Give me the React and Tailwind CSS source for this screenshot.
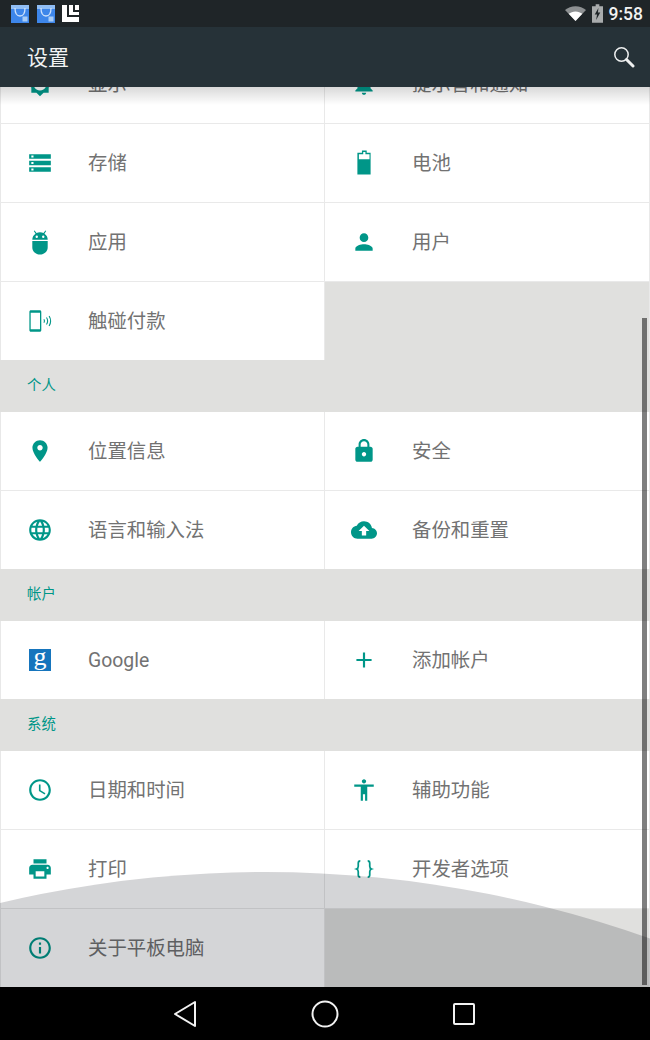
import React from 'react';

const CJK = "font-['Roboto','Noto_Sans_CJK_SC',sans-serif]";

const Icon = ({ d, children }) => (
  <svg viewBox="0 0 24 24" className="w-[26px] h-[26px] fill-[#009688]">
    {d && <path d={d} />}
    {children}
  </svg>
);

const icons = {
  display: <Icon d="M20 15.31L23.31 12 20 8.69V4h-4.69L12 .69 8.69 4H4v4.69L.69 12 4 15.31V20h4.69L12 23.31 15.31 20H20v-4.69zM12 18c-3.31 0-6-2.69-6-6s2.69-6 6-6 6 2.69 6 6-2.69 6-6 6z" />,
  bell: <Icon d="M12 22c1.1 0 2-.9 2-2h-4c0 1.1.89 2 2 2zm6-6v-5c0-3.07-1.64-5.64-4.5-6.32V4c0-.83-.67-1.5-1.5-1.5s-1.5.67-1.5 1.5v.68C7.63 5.36 6 7.92 6 11v5l-2 2v1h16v-1l-2-2z" />,
  storage: <Icon d="M2 20h20v-4H2v4zm2-3h2v2H4v-2zM2 4v4h20V4H2zm4 3H4V5h2v2zm-4 7h20v-4H2v4zm2-3h2v2H4v-2z" />,
  battery: (
    <Icon>
      <path d="M9.800 1.800h4.400v2H17.800v20H5.600v-20h4.200zM7 5.200v4.600h9.800V5.200h-3.800v-2h-2v2z" fillRule="evenodd" transform="translate(0.300 -1.300)" />
    </Icon>
  ),
  android: (
    <Icon>
      <path d="M6.300 1.800l.7-.5 1.800 2.500A6.800 6.800 0 0 1 12 3c1.200 0 2.300.3 3.200.8L17 1.300l.7.5-1.600 2.600A6.700 6.700 0 0 1 19.100 10H4.900a6.700 6.700 0 0 1 3-5.600L6.300 1.800zM9 6a1.100 1.100 0 1 0 0 2.200A1.100 1.100 0 0 0 9 6zm6 0a1.100 1.100 0 1 0 0 2.200A1.100 1.100 0 0 0 15 6zM4.900 11h14.200v6c0 3.600-3.200 6.500-7.100 6.500S4.900 20.600 4.900 17v-6z" fillRule="evenodd" />
    </Icon>
  ),
  person: <Icon d="M12 12c2.21 0 4-1.79 4-4s-1.79-4-4-4-4 1.79-4 4 1.79 4 4 4zm0 2c-2.67 0-8 1.34-8 4v2h16v-2c0-2.66-5.33-4-8-4z" />,
  nfc: (
    <Icon>
      <path d="M3.600 2h8.200c.8 0 1.400.6 1.400 1.400v17.200c0 .8-.6 1.400-1.400 1.400H3.600c-.8 0-1.400-.6-1.400-1.400V3.400C2.200 2.600 2.800 2 3.600 2zm-.2 2.400v15.200h8.600V4.400H3.400z" fillRule="evenodd" />
      <path d="M15.600 10.400c.7 1 .7 2.200 0 3.200M18 8.800c1.300 2 1.300 4.400 0 6.400M20.400 7.400c1.800 2.900 1.800 6.300 0 9.200" className="fill-none stroke-[#009688]" strokeWidth="1" />
    </Icon>
  ),
  place: <Icon d="M12 2C8.130 2 5 5.130 5 9c0 5.250 7 13 7 13s7-7.750 7-13c0-3.870-3.130-7-7-7zm0 9.500c-1.380 0-2.500-1.120-2.500-2.500s1.120-2.500 2.500-2.500 2.500 1.120 2.500 2.500-1.120 2.500-2.500 2.500z" />,
  lock: <Icon d="M18 8h-1V6c0-2.760-2.240-5-5-5S7 3.240 7 6v2H6c-1.100 0-2 .9-2 2v10c0 1.100.9 2 2 2h12c1.100 0 2-.9 2-2V10c0-1.100-.9-2-2-2zm-6 9c-1.100 0-2-.9-2-2s.9-2 2-2 2 .9 2 2-.9 2-2 2zm3.100-9H8.900V6c0-1.710 1.390-3.100 3.100-3.100 1.710 0 3.100 1.390 3.100 3.100v2z" />,
  language: <Icon d="M11.99 2C6.47 2 2 6.48 2 12s4.47 10 9.99 10C17.52 22 22 17.52 22 12S17.52 2 11.99 2zm6.93 6h-2.95c-.32-1.25-.78-2.45-1.38-3.56 1.84.63 3.37 1.91 4.33 3.56zM12 4.04c.83 1.2 1.48 2.53 1.91 3.96h-3.82c.43-1.43 1.08-2.76 1.91-3.96zM4.26 14C4.1 13.36 4 12.69 4 12s.1-1.36.26-2h3.38c-.08.66-.14 1.32-.14 2 0 .68.06 1.34.14 2H4.26zm.82 2h2.95c.32 1.25.78 2.45 1.38 3.56-1.84-.63-3.37-1.9-4.33-3.56zm2.95-8H5.08c.96-1.66 2.49-2.93 4.33-3.56C8.81 5.55 8.35 6.75 8.03 8zM12 19.96c-.83-1.2-1.48-2.53-1.91-3.96h3.82c-.43 1.43-1.08 2.76-1.91 3.96zM14.34 14H9.66c-.09-.66-.16-1.32-.16-2 0-.68.07-1.35.16-2h4.68c.09.65.16 1.32.16 2 0 .68-.07 1.34-.16 2zm.25 5.56c.6-1.11 1.06-2.31 1.38-3.56h2.95c-.96 1.65-2.49 2.93-4.33 3.56zM16.36 14c.08-.66.14-1.32.14-2 0-.68-.06-1.34-.14-2h3.38c.16.64.26 1.31.26 2s-.1 1.36-.26 2h-3.38z" />,
  cloud: <Icon d="M19.35 10.04C18.67 6.59 15.64 4 12 4 9.11 4 6.6 5.64 5.35 8.04 2.34 8.36 0 10.91 0 14c0 3.31 2.69 6 6 6h13c2.76 0 5-2.24 5-5 0-2.64-2.05-4.78-4.65-4.96zM14 13v4h-4v-4H7l5-5 5 5h-3z" />,
  google: (
    <div className="w-[22px] h-[22px] m-[2px] bg-[#1675bd] flex items-center justify-center text-white font-['Liberation_Serif',serif] text-[26px] leading-none pb-[6px]">
      g
    </div>
  ),
  plus: <Icon d="M19 13h-6v6h-2v-6H5v-2h6V5h2v6h6v2z" />,
  clock: (
    <Icon d="M11.99 2C6.47 2 2 6.48 2 12s4.47 10 9.99 10C17.52 22 22 17.52 22 12S17.52 2 11.99 2zM12 20c-4.42 0-8-3.58-8-8s3.58-8 8-8 8 3.58 8 8-3.58 8-8 8z">
      <path d="M12.5 7H11v6l5.25 3.15.75-1.23-4.5-2.67z" />
    </Icon>
  ),
  access: <Icon d="M12 2c1.1 0 2 .9 2 2s-.9 2-2 2-2-.9-2-2 .9-2 2-2zm9 7h-6v13h-2v-6h-2v6H9V9H3V7h18v2z" />,
  print: <Icon d="M19 8H5c-1.66 0-3 1.34-3 3v6h4v4h12v-4h4v-6c0-1.66-1.34-3-3-3zm-3 11H8v-5h8v5zm3-7c-.55 0-1-.45-1-1s.45-1 1-1 1 .45 1 1-.45 1-1 1zm-1-9H6v4h12V3z" />,
  braces: (
    <Icon>
      <path d="M8.600 4.400C7 4.400 6.700 5.200 6.700 6.600v2.800c0 1.400-.5 2.200-1.600 2.600 1.100.4 1.600 1.200 1.600 2.600v2.800c0 1.400.3 2.200 1.900 2.200M15.400 4.400c1.600 0 1.900.8 1.900 2.200v2.800c0 1.400.5 2.200 1.600 2.600-1.100.4-1.600 1.200-1.600 2.600v2.800c0 1.400-.3 2.200-1.900 2.200" className="fill-none stroke-[#009688]" strokeWidth="1.600" />
    </Icon>
  ),
  info: <Icon d="M11 17h2v-6h-2v6zm1-15C6.480 2 2 6.480 2 12s4.480 10 10 10 10-4.480 10-10S17.520 2 12 2zm0 18c-4.410 0-8-3.590-8-8s3.590-8 8-8 8 3.590 8 8-3.590 8-8 8zM11 9h2V7h-2v2z" />,
};

const sections = [
  {
    items: [
      ['display', '显示'], ['bell', '提示音和通知'],
      ['storage', '存储'], ['battery', '电池'],
      ['android', '应用'], ['person', '用户'],
      ['nfc', '触碰付款'],
    ],
  },
  {
    title: '个人',
    items: [
      ['place', '位置信息'], ['lock', '安全'],
      ['language', '语言和输入法'], ['cloud', '备份和重置'],
    ],
  },
  { title: '帐户', items: [['google', 'Google'], ['plus', '添加帐户']] },
  {
    title: '系统',
    items: [
      ['clock', '日期和时间'], ['access', '辅助功能'],
      ['print', '打印'], ['braces', '开发者选项'],
      ['info', '关于平板电脑'],
    ],
  },
];

const Tile = ({ icon, label }) => (
  <div className="h-[78px] bg-white flex items-center pl-[27px] even:pl-[26px] odd:shadow-[inset_1px_0_0_#e8e8e8]">
    <div className="w-[26px] h-[26px] shrink-0">{icons[icon]}</div>
    <span className="ml-[35px] pt-[2px] text-[19.4px] leading-none text-[#727272]">{label}</span>
  </div>
);

const BagIcon = () => (
  <svg viewBox="0 0 18 18" className="w-[18px] h-[18px]">
    <rect width="18" height="18" fill="#3d86ea" />
    <rect width="18" height="4" fill="#8fbdf5" />
    <path d="M4 3c0 5 2 8 5 8s5-3 5-8" fill="none" stroke="#cfe2fb" strokeWidth="1.300" />
    <rect x="11.500" y="11.500" width="5" height="5" fill="#a9cdf7" />
  </svg>
);

const StatusBar = () => (
  <div className="h-[27px] shrink-0 bg-[#1f2528] flex items-center pl-[11px] pr-[7px]">
    <BagIcon />
    <div className="ml-[8px]"><BagIcon /></div>
    <svg viewBox="0 0 17 17" className="w-[17px] h-[17px] ml-[7px] fill-white">
      <path d="M0 0h5v12h12v5H0zM7 0h4v7h6v3H7zM13 0h4v5h-4z" />
    </svg>
    <div className="ml-auto flex items-center">
      <svg viewBox="0 0 24 18" className="w-[21px] h-[16px]">
        <path d="M12 17L0 4.500C3.300 1.700 7.400 0 12 0s8.700 1.700 12 4.500z" fill="#8d9092" />
        <path d="M12 17L4.200 8.800C6.300 7 9 6 12 6s5.700 1 7.800 2.800z" fill="#fff" />
      </svg>
      <svg viewBox="0 0 12 20" className="w-[11px] h-[19px] ml-[6px]">
        <path d="M4 0h4v2h4v18H0V2h4z" fill="#a9acad" />
        <path d="M7 4L3 11h2.500L4.500 17 9 9H6.500z" fill="#1f2528" />
      </svg>
      <span className="ml-[6px] pt-[2px] text-[17.5px] leading-none font-medium text-[#f2f2f2] font-['Roboto',sans-serif]">9:58</span>
    </div>
  </div>
);

const Toolbar = () => (
  <div className="relative z-20 h-[60px] shrink-0 bg-[#263238] flex items-center justify-between pl-[27px] pr-[15px]">
    <span className="pt-[2px] text-[21px] leading-none text-[#f2f3f3]">设置</span>
    <svg viewBox="0 0 22 22" className="w-[22px] h-[22px] fill-none stroke-[#eef0f0]">
      <circle cx="8.500" cy="8.500" r="6.700" strokeWidth="1.500" />
      <path d="M13.500 13.500L20 20" strokeWidth="3" strokeLinecap="round" />
    </svg>
  </div>
);

const NavBar = () => (
  <div className="h-[53px] shrink-0 bg-black flex items-center pl-[173px] gap-[114px]">
    <svg viewBox="0 0 24 28" className="w-[24px] h-[28px] fill-none stroke-[#f2f2f2]" strokeWidth="2" strokeLinejoin="round">
      <path d="M22 2v24L2 14z" />
    </svg>
    <svg viewBox="0 0 28 28" className="w-[28px] h-[28px] fill-none stroke-[#f2f2f2]" strokeWidth="2">
      <circle cx="14" cy="14" r="12.500" />
    </svg>
    <svg viewBox="0 0 24 24" className="w-[24px] h-[24px] -ml-[1px] fill-none stroke-[#f2f2f2]" strokeWidth="2" strokeLinejoin="round">
      <rect x="2" y="2" width="20" height="20" rx="1" />
    </svg>
  </div>
);

export default function App() {
  return (
    <div className={`w-[650px] h-[1040px] flex flex-col overflow-hidden ${CJK}`}>
      <StatusBar />
      <Toolbar />
      <main className="relative flex-1 overflow-hidden bg-[#e0e0de]">
        <div className="-mt-[42px]">
          {sections.map((section, i) => (
            <section key={i}>
              {section.title && (
                <div className="h-[52px] pl-[27px] pt-[17px] text-[14.4px] leading-[18px] text-[#009688]">
                  {section.title}
                </div>
              )}
              <div className="grid grid-cols-[324px_324px] gap-px pr-px bg-[#e9e9e9]">
                {section.items.map(([icon, label]) => (
                  <Tile key={label} icon={icon} label={label} />
                ))}
                {section.items.length % 2 === 1 && <div className="bg-[#e0e0de]" />}
              </div>
            </section>
          ))}
        </div>

        {/* toolbar shadow */}
        <div className="absolute top-0 inset-x-0 h-[18px] bg-gradient-to-b from-black/15 to-transparent" />
        {/* touch ripple */}
        <div className="absolute top-[785px] left-[-883px] w-[2296px] h-[2296px] rounded-full bg-[#000612]/[.17]" />
        {/* scrollbar */}
        <div className="absolute top-[231px] bottom-[2px] left-[642px] w-[5px] bg-black/50" />
      </main>
      <NavBar />
    </div>
  );
}
